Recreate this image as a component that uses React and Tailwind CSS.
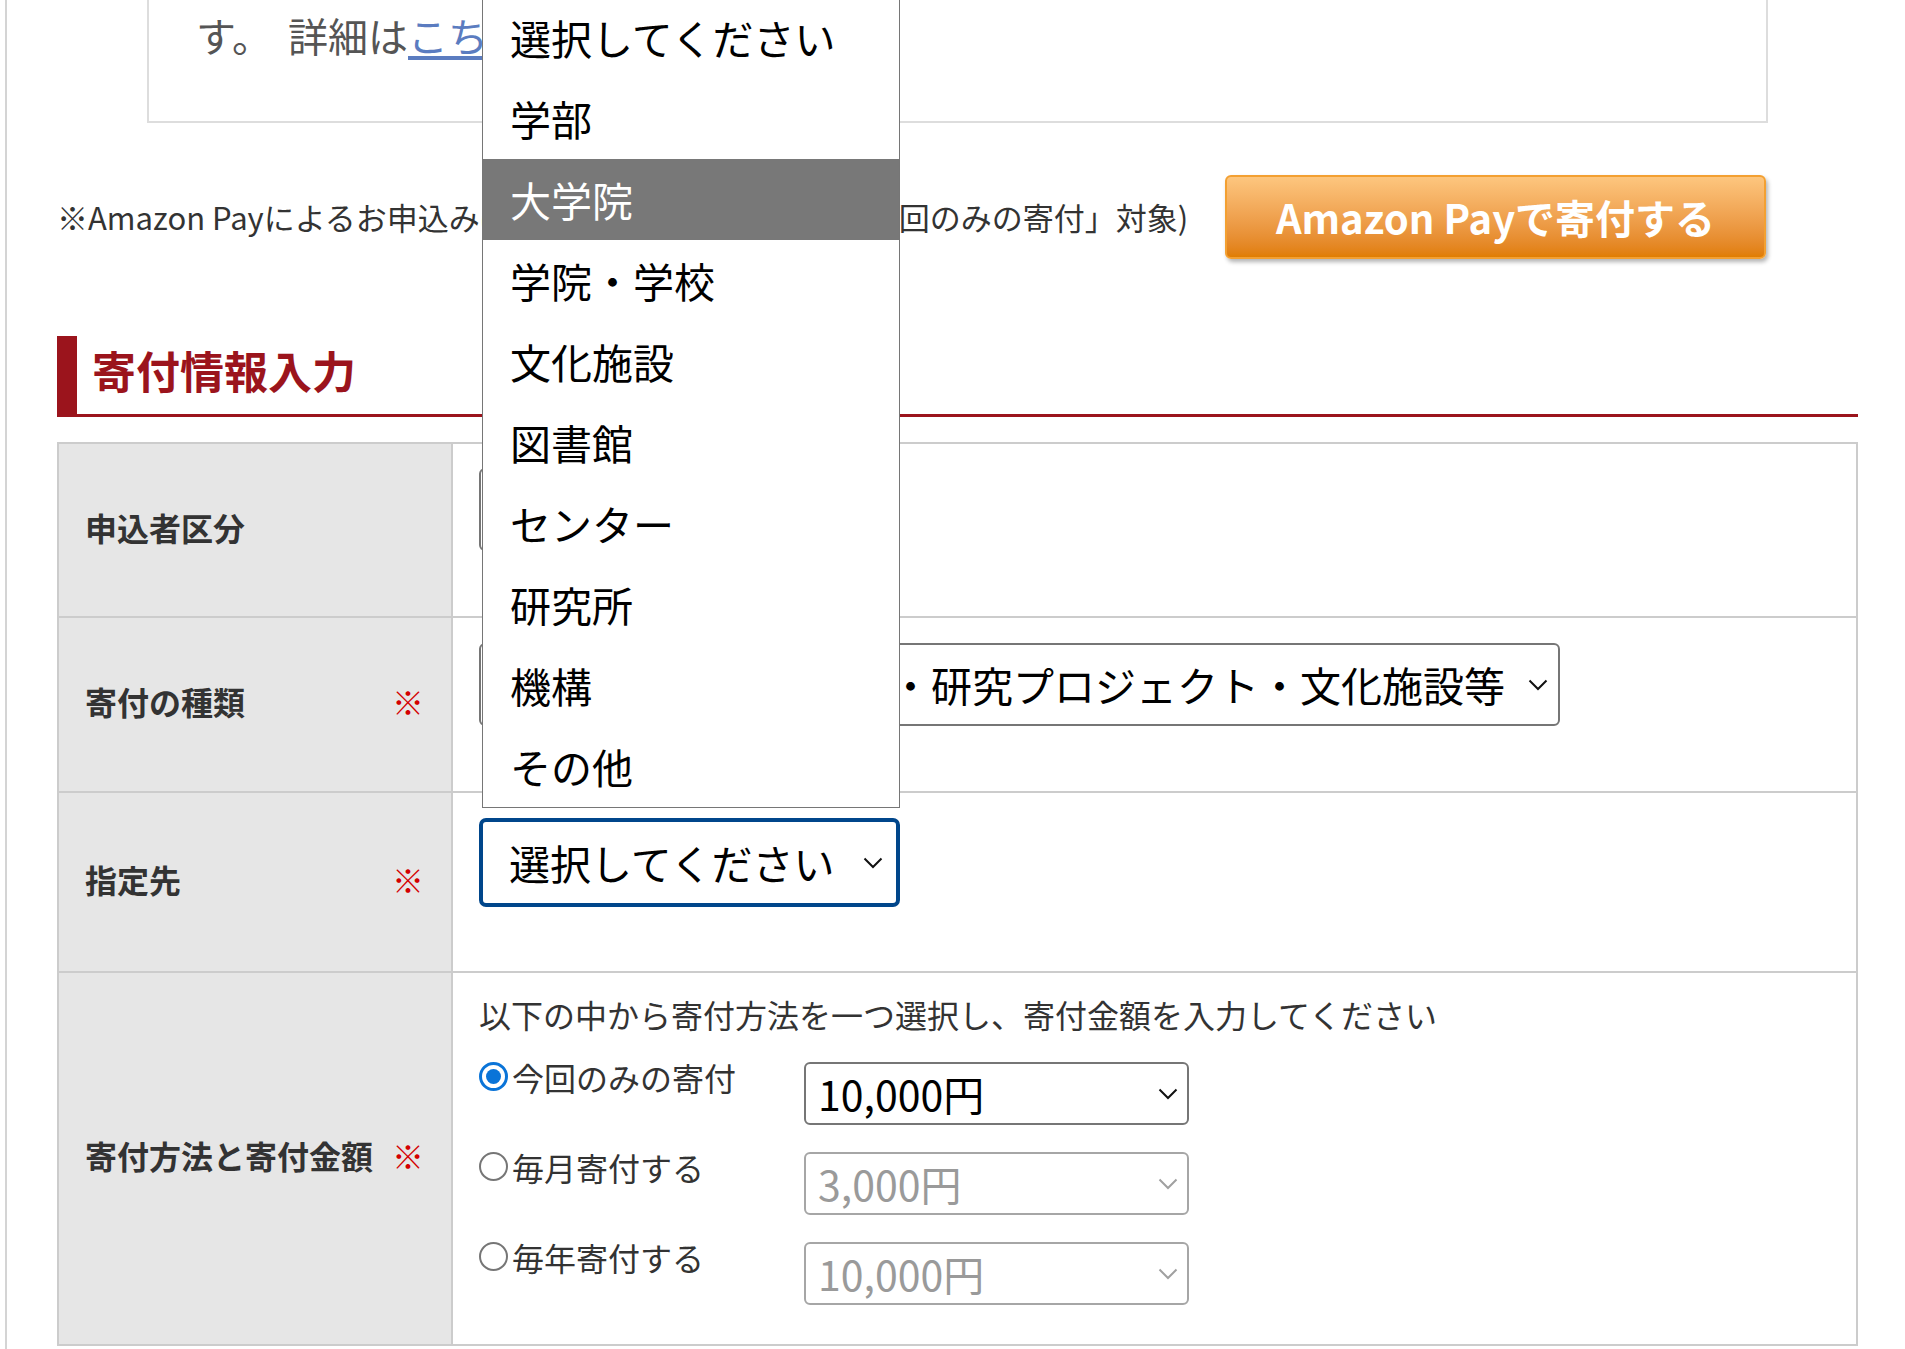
import React from "react";

const Chevron = ({ color = "#111" }) => (
  <svg width="20" height="12" viewBox="0 0 20 12" fill="none">
    <polyline points="1.5,1.5 10,10 18.5,1.5" stroke={color} strokeWidth="2" />
  </svg>
);

const Radio = ({ checked }) =>
  checked ? (
    <span className="flex h-[29px] w-[29px] shrink-0 items-center justify-center rounded-full border-[3px] border-[#0a74d8] bg-white">
      <span className="h-[15px] w-[15px] rounded-full bg-[#0a74d8]" />
    </span>
  ) : (
    <span className="h-[29px] w-[29px] shrink-0 rounded-full border-2 border-[#767676] bg-white" />
  );

const options = ["選択してください", "学部", "大学院", "学院・学校", "文化施設", "図書館", "センター", "研究所", "機構", "その他"];

const amounts = [
  { label: "今回のみの寄付", value: "10,000円", checked: true },
  { label: "毎月寄付する", value: "3,000円", checked: false },
  { label: "毎年寄付する", value: "10,000円", checked: false },
];

const Label = ({ text, required }) => (
  <div className="flex w-[394px] shrink-0 items-center justify-between border-r-2 border-[#cccccc] bg-[#e6e6e6] pb-[7px] pl-[26px] pr-[27px] text-[32px] font-bold text-[#333]">
    <span>{text}</span>
    {required && <span className="font-normal text-[#d40000]">※</span>}
  </div>
);

export default function App() {
  return (
    <div className="relative min-h-[1349px] overflow-hidden bg-white font-['Noto_Sans_CJK_JP',sans-serif] text-[#333]">
      <div className="ml-[5px] min-h-[1349px] border-l-2 border-[#d4d4d4] pl-[50px] pr-[47px]">
        {/* info box, top cut off by viewport */}
        <div className="mx-[90px] h-[123px] border-x-2 border-b-2 border-[#dddddd]">
          <p className="pl-[47px] pt-[11px] text-[40px] leading-[48px] text-[#555]">
            す。<span className="ml-[16px]">詳細は</span>
            <a className="text-[#5b7cc0] underline underline-offset-4">こちら</a>
          </p>
        </div>

        <div className="mt-[52px] flex items-center justify-between pr-[92px]">
          <p className="whitespace-nowrap text-[31px] leading-[46px] text-[#333]">
            ※Amazon Payによるお申込<span className="tracking-[-1px]">みは、クレジットカード決済「今</span>回のみの寄付」対象)
          </p>
          <button className="flex h-[84px] w-[541px] items-center justify-center rounded-[6px] border-2 border-[#f3a032] bg-linear-to-b from-[#fdc67e] to-[#e07d00] text-[40px] font-bold text-white shadow-[2px_3px_4px_rgba(0,0,0,0.3)]">
            Amazon Payで寄付する
          </button>
        </div>

        <h2 className="mt-[77px] flex h-[81px] items-center border-b-[3px] border-l-[20px] border-[#9b141c] pb-[10px] pl-[15px] text-[44px] font-bold text-[#9b141c]">
          寄付情報入力
        </h2>

        <div className="mt-[25px] border-2 border-[#cccccc]">
          <div className="flex h-[172px]">
            <Label text="申込者区分" />
            <div className="pl-[26px] pt-[24px]">
              <div className="flex h-[83px] w-[300px] items-center justify-between rounded-[6px] border-2 border-[#767676] pl-[28px] pr-[10px] text-[41px] text-black">
                <span>個人</span>
                <Chevron />
              </div>
            </div>
          </div>

          <div className="flex h-[175px] border-t-2 border-[#cccccc]">
            <Label text="寄付の種類" required />
            <div className="pl-[26px] pt-[25px]">
              <div className="flex h-[83px] w-[1081px] items-center justify-between rounded-[6px] border-2 border-[#767676] pl-[40px] pr-[10px] text-[41px] text-black">
                <span className="whitespace-nowrap">学部・研究科・学院・研究プロジェクト・文化施設等</span>
                <Chevron />
              </div>
            </div>
          </div>

          <div className="flex h-[180px] border-t-2 border-[#cccccc]">
            <Label text="指定先" required />
            <div className="pl-[26px] pt-[25px]">
              <div className="flex h-[89px] w-[421px] items-center justify-between rounded-[7px] border-4 border-[#00468b] pl-[26px] pr-[13px] text-[41px] text-black">
                <span className="whitespace-nowrap">選択してください</span>
                <Chevron />
              </div>
            </div>
          </div>

          <div className="flex h-[373px] border-t-2 border-[#cccccc]">
            <Label text="寄付方法と寄付金額" required />
            <div className="pl-[26px] pt-[18px]">
              <p className="text-[32px] leading-[46px] text-[#333]">以下の中から寄付方法を一つ選択し、寄付金額を入力してください</p>
              <div className="mt-[25px] flex flex-col gap-[27px]">
                {amounts.map((a) => (
                  <div key={a.label} className="flex items-start">
                    <div className="flex w-[325px] items-start gap-[4px]">
                      <Radio checked={a.checked} />
                      <span className="text-[32px] leading-[30px] text-[#333]">{a.label}</span>
                    </div>
                    <div
                      className={
                        a.checked
                          ? "flex h-[63px] w-[385px] items-center justify-between rounded-[6px] border-2 border-[#767676] pl-[12px] pr-[9px] text-[41px] text-black"
                          : "flex h-[63px] w-[385px] items-center justify-between rounded-[6px] border-2 border-[#a6a6a6] pl-[12px] pr-[9px] text-[41px] text-[#9a9a9a]"
                      }
                    >
                      <span>{a.value}</span>
                      <Chevron color={a.checked ? "#111" : "#a0a0a0"} />
                    </div>
                  </div>
                ))}
              </div>
            </div>
          </div>
        </div>
      </div>

      {/* open select list for 指定先 */}
      <ul className="absolute left-[482px] top-[-4px] w-[418px] border border-[#767676] bg-white">
        {options.map((o, i) => (
          <li
            key={o}
            className={
              i === 2
                ? "flex h-[81px] items-center bg-[#787878] pl-[27px] text-[41px] text-white"
                : "flex h-[81px] items-center pl-[27px] text-[41px] text-black"
            }
          >
            {o}
          </li>
        ))}
      </ul>
    </div>
  );
}
